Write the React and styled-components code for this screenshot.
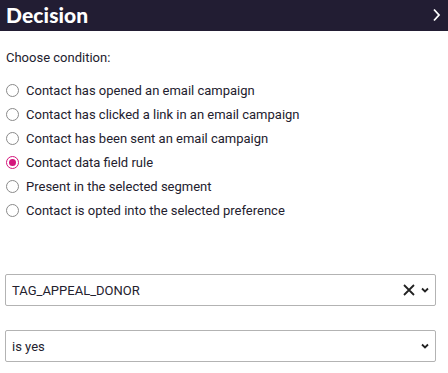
import styled, { createGlobalStyle } from "styled-components";

const Global = createGlobalStyle`
  body {
    margin: 0;
    background: #fff;
    font-family: Roboto, "Liberation Sans", sans-serif;
    color: #23212e;
  }
`;

const Panel = styled.div`
  width: 448px;
  height: 373px;
  display: flex;
  flex-direction: column;
`;

const Header = styled.div`
  height: 31px;
  background: #221d33;
  display: flex;
  align-items: center;
  justify-content: space-between;
  padding: 0 7px 2px 6px;
  box-sizing: border-box;
`;

const Title = styled.h1`
  margin: 0;
  font-family: Lato, "Noto Sans", sans-serif;
  font-weight: 900;
  font-size: 21px;
  color: #fff;
  letter-spacing: 0.1px;
`;

const Body = styled.div`
  padding: 0 12px 0 5px;
  display: flex;
  flex-direction: column;
`;

const Label = styled.div`
  font-size: 13px;
  line-height: 16px;
  margin-top: 19px;
  padding-left: 1px;
`;

const Options = styled.div`
  display: flex;
  flex-direction: column;
  margin-top: 12px;
`;

const Option = styled.label`
  display: flex;
  align-items: center;
  height: 24px;
  gap: 7px;
  font-size: 13px;
`;

const Radio = styled.span`
  width: 13px;
  height: 13px;
  border-radius: 50%;
  box-sizing: border-box;
  border: 1px solid ${(p) => (p.checked ? "#d4157c" : "#8a8a8a")};
  display: flex;
  align-items: center;
  justify-content: center;
  margin-left: 1px;

  &::after {
    content: "";
    width: 7px;
    height: 7px;
    border-radius: 50%;
    background: ${(p) => (p.checked ? "#d4157c" : "transparent")};
  }
`;

const Select = styled.div`
  height: 32px;
  border: 1px solid #b3b3b3;
  border-radius: 2px;
  box-sizing: border-box;
  display: flex;
  align-items: center;
  padding: 0 6px 0 6px;
  font-size: 13px;
  margin-top: ${(p) => p.gap}px;
`;

const Value = styled.span`
  flex: 1;
`;

const Icons = styled.span`
  display: flex;
  align-items: center;
  gap: 6px;
  color: #222;
`;

const options = [
  "Contact has opened an email campaign",
  "Contact has clicked a link in an email campaign",
  "Contact has been sent an email campaign",
  "Contact data field rule",
  "Present in the selected segment",
  "Contact is opted into the selected preference",
];

const Chevron = () => (
  <svg width="8" height="6" viewBox="0 0 8 6">
    <path d="M1 1.5 L4 4.5 L7 1.5" fill="none" stroke="#222" strokeWidth="1.8" />
  </svg>
);

export default function App() {
  return (
    <Panel>
      <Global />
      <Header>
        <Title>Decision</Title>
        <svg width="9" height="14" viewBox="0 0 9 14">
          <path d="M2 1.5 L7 7 L2 12.5" fill="none" stroke="#fff" strokeWidth="1.8" />
        </svg>
      </Header>
      <Body>
        <Label>Choose condition:</Label>
        <Options>
          {options.map((o, i) => (
            <Option key={o}>
              <Radio checked={i === 3} />
              {o}
            </Option>
          ))}
        </Options>
        <Select gap={52}>
          <Value>TAG_APPEAL_DONOR</Value>
          <Icons>
            <svg width="12" height="12" viewBox="0 0 12 12">
              <path d="M1 1 L11 11 M11 1 L1 11" stroke="#222" strokeWidth="1.8" />
            </svg>
            <Chevron />
          </Icons>
        </Select>
        <Select gap={24}>
          <Value>is yes</Value>
          <Icons>
            <Chevron />
          </Icons>
        </Select>
      </Body>
    </Panel>
  );
}
